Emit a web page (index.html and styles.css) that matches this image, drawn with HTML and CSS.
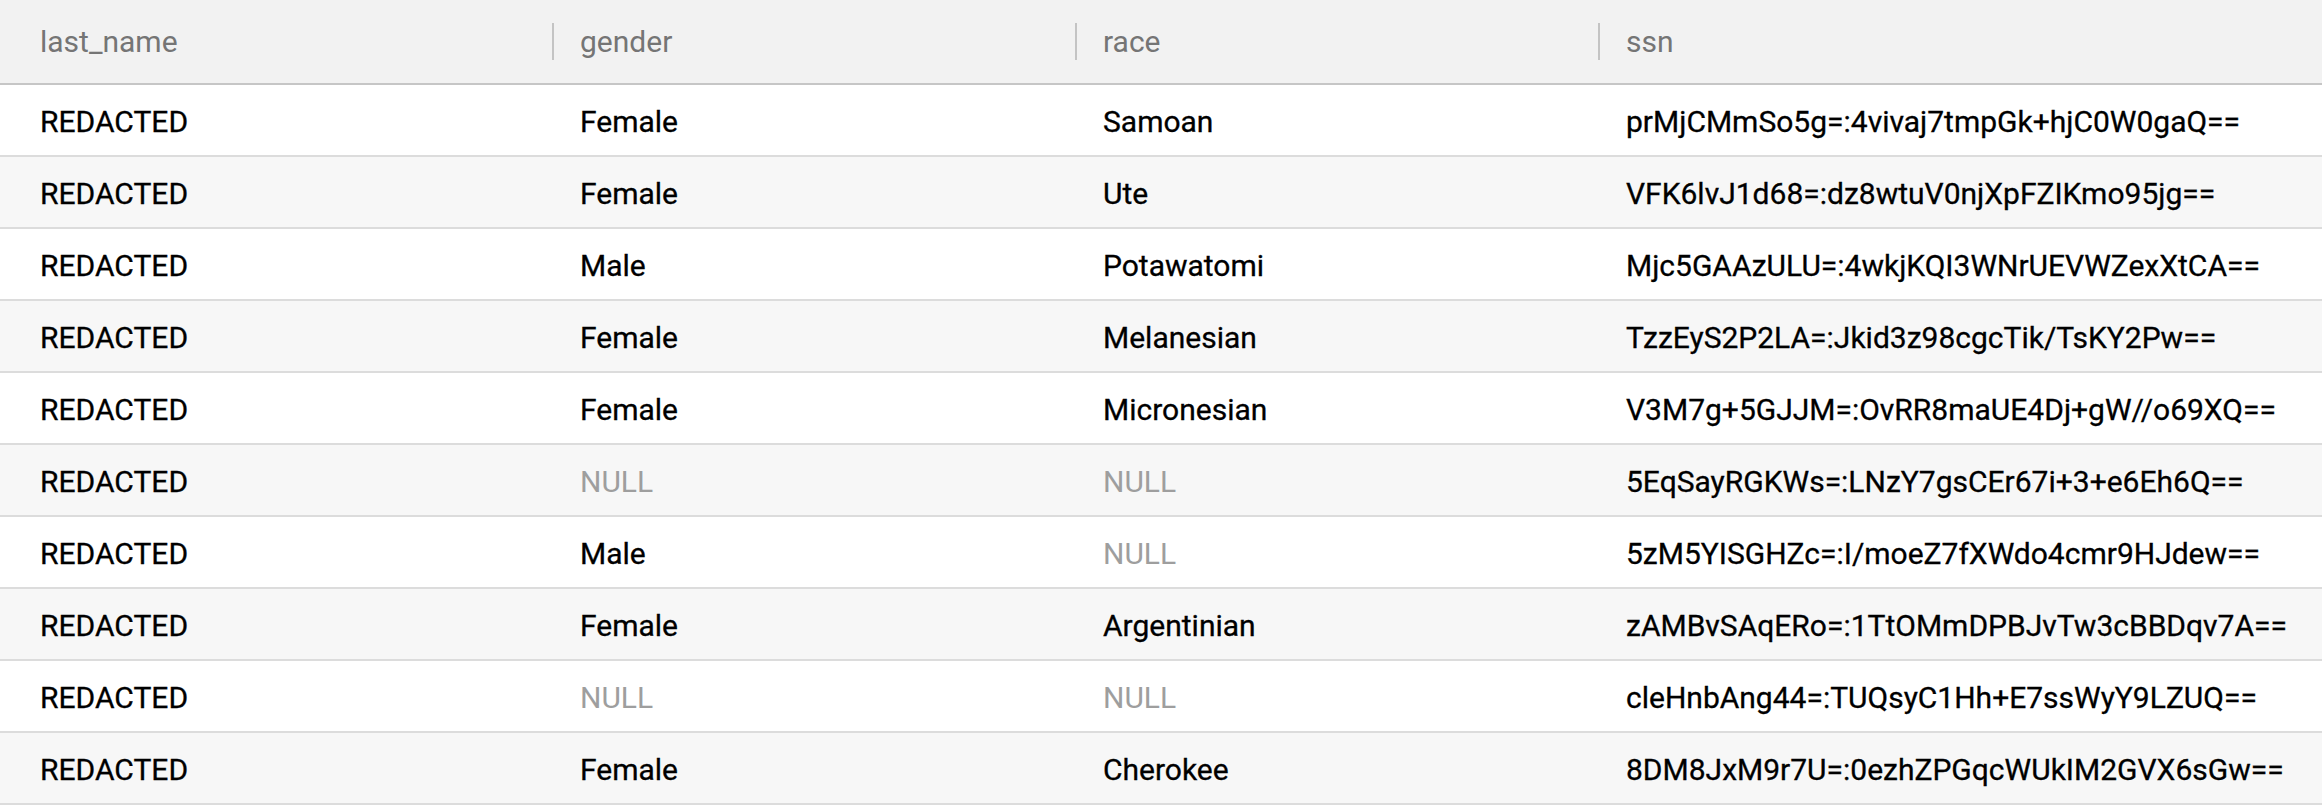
FILE: index.html
```html
<!DOCTYPE html>
<html>
<head>
<meta charset="utf-8">
<link rel="stylesheet" href="styles.css">
</head>
<body>
<div class="table">
  <div class="row head">
    <div class="cell first">last_name</div>
    <div class="cell"><span class="divider"></span>gender</div>
    <div class="cell"><span class="divider"></span>race</div>
    <div class="cell"><span class="divider"></span>ssn</div>
  </div>
  <div class="row">
    <div class="cell first">REDACTED</div><div class="cell">Female</div><div class="cell">Samoan</div><div class="cell">prMjCMmSo5g=:4vivaj7tmpGk+hjC0W0gaQ==</div>
  </div>
  <div class="row alt">
    <div class="cell first">REDACTED</div><div class="cell">Female</div><div class="cell">Ute</div><div class="cell">VFK6lvJ1d68=:dz8wtuV0njXpFZIKmo95jg==</div>
  </div>
  <div class="row">
    <div class="cell first">REDACTED</div><div class="cell">Male</div><div class="cell">Potawatomi</div><div class="cell">Mjc5GAAzULU=:4wkjKQI3WNrUEVWZexXtCA==</div>
  </div>
  <div class="row alt">
    <div class="cell first">REDACTED</div><div class="cell">Female</div><div class="cell">Melanesian</div><div class="cell">TzzEyS2P2LA=:Jkid3z98cgcTik/TsKY2Pw==</div>
  </div>
  <div class="row">
    <div class="cell first">REDACTED</div><div class="cell">Female</div><div class="cell">Micronesian</div><div class="cell">V3M7g+5GJJM=:OvRR8maUE4Dj+gW//o69XQ==</div>
  </div>
  <div class="row alt">
    <div class="cell first">REDACTED</div><div class="cell null">NULL</div><div class="cell null">NULL</div><div class="cell">5EqSayRGKWs=:LNzY7gsCEr67i+3+e6Eh6Q==</div>
  </div>
  <div class="row">
    <div class="cell first">REDACTED</div><div class="cell">Male</div><div class="cell null">NULL</div><div class="cell">5zM5YISGHZc=:I/moeZ7fXWdo4cmr9HJdew==</div>
  </div>
  <div class="row alt">
    <div class="cell first">REDACTED</div><div class="cell">Female</div><div class="cell">Argentinian</div><div class="cell">zAMBvSAqERo=:1TtOMmDPBJvTw3cBBDqv7A==</div>
  </div>
  <div class="row">
    <div class="cell first">REDACTED</div><div class="cell null">NULL</div><div class="cell null">NULL</div><div class="cell">cleHnbAng44=:TUQsyC1Hh+E7ssWyY9LZUQ==</div>
  </div>
  <div class="row alt">
    <div class="cell first">REDACTED</div><div class="cell">Female</div><div class="cell">Cherokee</div><div class="cell">8DM8JxM9r7U=:0ezhZPGqcWUkIM2GVX6sGw==</div>
  </div>
</div>
</body>
</html>
```
FILE: styles.css
```css
html, body {
  margin: 0;
  padding: 0;
  background: #ffffff;
}
body {
  font-family: Roboto, "Liberation Sans", sans-serif;
  font-size: 30px;
  color: #000000;
}
.table {
  display: flex;
  flex-direction: column;
}
.row {
  display: grid;
  grid-template-columns: 552px 523px 523px 1fr;
  height: 70px;
  border-bottom: 2px solid #dcdcdc;
  background: #ffffff;
}
.row.alt {
  background: #f7f7f7;
}
.row.head {
  height: 83px;
  background: #f2f2f2;
  border-bottom: 2px solid #c6c6c6;
  color: #757575;
}
.cell {
  display: flex;
  align-items: center;
  padding-left: 28px;
  padding-top: 3px;
  white-space: nowrap;
  -webkit-text-stroke: 0.3px #000000;
}
.cell.first {
  padding-left: 40px;
}
.head .cell {
  padding-left: 0;
  padding-top: 0;
  -webkit-text-stroke: 0;
}
.head .cell.first {
  padding-left: 40px;
}
.divider {
  width: 2px;
  height: 37px;
  background: #c4c4c4;
  margin-right: 26px;
}
.cell.null {
  color: #9e9e9e;
  -webkit-text-stroke: 0;
}
```
